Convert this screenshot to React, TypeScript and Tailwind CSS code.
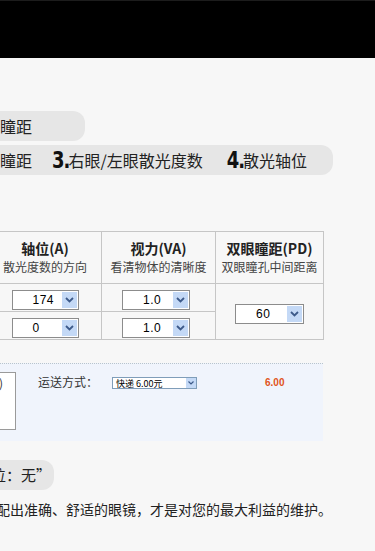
import React from "react";

const cjk = { fontFamily: '"Noto Sans CJK SC", "Noto Sans", sans-serif' };
const heavy = { fontFamily: '"DejaVu Sans Condensed", "Liberation Sans Narrow", "DejaVu Sans", sans-serif' };

function Sel({ value, w = 67 }: { value: string; w?: number }) {
  return (
    <div
      className="inline-flex items-stretch h-[20px] border border-[#8c8c8c] bg-white p-[1px]"
      style={{ width: w }}
    >
      <div
        className="flex-1 flex items-center pl-[19px] text-[12px] text-black leading-none tracking-[0.5px]"
        style={{ fontFamily: '"Liberation Sans", Arial, sans-serif' }}
      >
        {value}
      </div>
      <div className="w-[15px] bg-[#c4d9f6] flex items-center justify-center">
        <svg width="9" height="6" viewBox="0 0 9 6">
          <path d="M1 1 L4.5 4.5 L8 1" fill="none" stroke="#3d5a8a" strokeWidth="1.8" />
        </svg>
      </div>
    </div>
  );
}

export default function App() {
  return (
    <div className="w-[375px] h-[551px] overflow-hidden bg-[#f7f7f7] text-[#222]" style={cjk}>
      <div className="h-[58px] bg-black border-t border-[#1c1c1c]" />

      {/* pill 1 */}
      <div className="mt-[53px] h-[30px] w-[85px] rounded-r-[12px] bg-[#e6e6e6] flex items-center overflow-hidden whitespace-nowrap">
        <span className="text-[16px] ml-[-32px]">双眼瞳距</span>
      </div>

      {/* pill 2 */}
      <div className="mt-[4px] h-[30px] w-[333px] rounded-r-[12px] bg-[#e6e6e6] flex items-center overflow-hidden whitespace-nowrap text-[16px]">
        <span className="ml-[-32px]">双眼瞳距</span>
        <span
          className="ml-[20px] mr-[-1px] inline-block text-[20px] font-black text-[#111] leading-none scale-y-[1.12] tracking-[-1px]"
          style={heavy}
        >
          3.
        </span>
        <span>右眼/左眼散光度数</span>
        <span
          className="ml-[24px] mr-[-1px] inline-block text-[20px] font-black text-[#111] leading-none scale-y-[1.12] tracking-[-1px]"
          style={heavy}
        >
          4.
        </span>
        <span>散光轴位</span>
      </div>

      {/* table */}
      <table className="mt-[56px] ml-[-12px] w-[335px] border-collapse table-fixed">
        <colgroup>
          <col style={{ width: 113 }} />
          <col style={{ width: 114 }} />
          <col style={{ width: 108 }} />
        </colgroup>
        <tbody>
          <tr className="h-[52px]">
            {[
              ["轴位(A)", "散光度数的方向"],
              ["视力(VA)", "看清物体的清晰度"],
              ["双眼瞳距(PD)", "双眼瞳孔中间距离"],
            ].map(([t, s]) => (
              <td key={t} className="border border-[#c6c6c6] text-center align-middle p-0 whitespace-nowrap">
                <div className="text-[14px] font-bold leading-[18px] text-[#222]">{t}</div>
                <div className="text-[12px] leading-[18px] text-[#444] mt-[1px]">{s}</div>
              </td>
            ))}
          </tr>
          <tr className="h-[28px]">
            <td className="border border-[#c6c6c6] text-center align-middle p-0">
              <Sel value="174" />
            </td>
            <td className="border border-[#c6c6c6] text-left align-middle p-0 pl-[20px]">
              <Sel value="1.0" w={68} />
            </td>
            <td rowSpan={2} className="border border-[#c6c6c6] text-center align-middle p-0">
              <Sel value="60" w={69} />
            </td>
          </tr>
          <tr className="h-[28px]">
            <td className="border border-[#c6c6c6] text-center align-middle p-0">
              <Sel value="0" />
            </td>
            <td className="border border-[#c6c6c6] text-left align-middle p-0 pl-[20px]">
              <Sel value="1.0" w={68} />
            </td>
          </tr>
        </tbody>
      </table>

      {/* shipping */}
      <div className="mt-[23px] w-[323px] h-[78px] bg-[#f0f4fc] border-t border-dotted border-[#b8c4cc] pt-[8px] flex items-start">
        <div className="ml-[-60px] w-[76px] h-[58px] bg-white border border-[#9a9a9a] flex justify-end pr-[12px] pt-[2px]">
          <span className="text-[12px] text-[#333] leading-[16px]">(选填)</span>
        </div>
        <div className="ml-[22px] w-[74px] mt-[2px] text-[12px] leading-[16px] text-[#333]">运送方式：</div>
        <div className="mt-[5px] w-[85px] h-[12px] border border-[#7f9db9] bg-white flex items-stretch">
          <div className="flex-1 flex items-center pl-[3px] text-[9px] leading-none text-black whitespace-nowrap">快递 6.00元</div>
          <div className="w-[10px] bg-[#c4d9f6] flex items-center justify-center">
            <svg width="6" height="4" viewBox="0 0 6 4">
              <path d="M0.5 0.5 L3 3 L5.5 0.5" fill="none" stroke="#3d5a8a" strokeWidth="1.2" />
            </svg>
          </div>
        </div>
        <div
          className="ml-[68px] mt-[5px] text-[10px] leading-[12px] font-bold text-[#e0531a]"
          style={{ fontFamily: '"Liberation Sans", Arial, sans-serif' }}
        >
          6.00
        </div>
      </div>

      {/* pill 3 */}
      <div className="mt-[19px] h-[30px] w-[54px] rounded-r-[12px] bg-[#e6e6e6] flex items-center overflow-hidden whitespace-nowrap">
        <span className="text-[15px] ml-[-9px]">位：无”</span>
      </div>

      <div className="mt-[6px] overflow-x-hidden whitespace-nowrap">
        <span className="text-[14px] leading-[20px] ml-[-4px] inline-block">配出准确、舒适的眼镜，才是对您的最大利益的维护。</span>
      </div>
    </div>
  );
}
